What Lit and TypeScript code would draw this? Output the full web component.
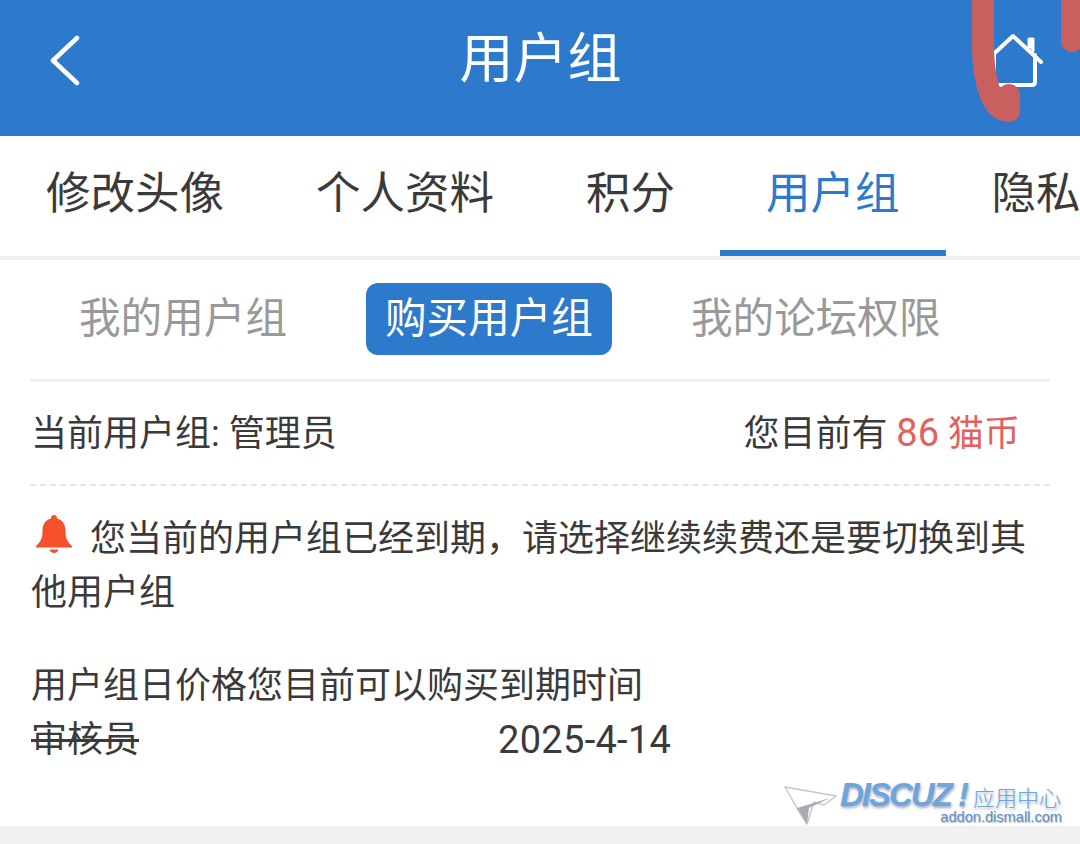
import { LitElement, html, css } from "lit";
import { customElement } from "lit/decorators.js";

@customElement("app-root")
export class AppRoot extends LitElement {
  static styles = css`
    :host {
      display: flex;
      flex-direction: column;
      position: relative;
      width: 1080px;
      height: 844px;
      overflow: hidden;
      background: #fff;
      color: #3a3a3a;
      font-family: Roboto, "Noto Sans CJK SC", sans-serif;
      font-size: 36px;
    }
    .header {
      height: 136px;
      box-sizing: border-box;
      padding: 0 37px 16px 50px;
      background: #2d79cc;
      color: #fff;
      display: grid;
      grid-template-columns: 1fr 162px 1fr;
      align-items: center;
    }
    .title {
      font-size: 54px;
      line-height: 64px;
      white-space: nowrap;
      margin-left: -6px;
    }
    .home {
      justify-self: end;
    }
    .tabs {
      display: flex;
      height: 124px;
      box-sizing: border-box;
      border-bottom: 4px solid #eee;
      overflow: hidden;
    }
    .tab {
      flex: none;
      padding: 0 46px;
      font-size: 44.5px;
      line-height: 116px;
      height: 120px;
      box-sizing: border-box;
      border-bottom: 6px solid transparent;
    }
    .tab.active {
      margin-left: -1px;
      color: #2d79cc;
      border-bottom-color: #2d79cc;
    }
    .main {
      flex: 1;
      margin: 0 30px;
    }
    .subtabs {
      display: flex;
      gap: 60px;
      align-items: center;
      height: 122px;
      box-sizing: border-box;
      padding: 23px 0 25px 30px;
      border-bottom: 3px solid #eee;
      font-size: 41.6px;
      color: #999;
    }
    .subtab {
      height: 72px;
      line-height: 72px;
      padding: 0 19px;
      border-radius: 12px;
    }
    .subtab.active {
      background: #2d79cc;
      color: #fff;
    }
    .info {
      display: flex;
      justify-content: space-between;
      align-items: center;
      height: 104px;
      box-sizing: border-box;
      padding: 0 30px 6px 1px;
      border-bottom: 2px dashed #e4e4e4;
    }
    .red {
      color: #e5605c;
    }
    .num {
      font-size: 38px;
    }
    .notice {
      margin: 26px 0 0;
      padding-left: 1px;
      line-height: 54px;
    }
    .bell {
      vertical-align: -2px;
      margin: 0 18px 0 5px;
    }
    .list {
      margin-top: 39px;
      padding-left: 1px;
      line-height: 54px;
    }
    .row {
      display: grid;
      grid-template-columns: 467px auto;
    }
    .gone {
      text-decoration: line-through;
    }
    .date {
      font-size: 38px;
      letter-spacing: 0.3px;
    }
    .footer {
      height: 18px;
      background: #f0f0f0;
    }
    .scribble {
      position: absolute;
      left: 960px;
      top: 0;
    }
    .mark {
      position: absolute;
      left: 784px;
      top: 780px;
      width: 284px;
      height: 48px;
    }
    .mark svg {
      position: absolute;
      left: 0;
      top: 4px;
    }
    .brand {
      position: absolute;
      left: 56px;
      top: 1px;
      display: flex;
      align-items: baseline;
      gap: 6px;
      white-space: nowrap;
      color: #6ea5dc;
      text-shadow: 1px 2px 3px rgba(70, 90, 120, 0.5);
    }
    .brand b {
      font: italic bold 33px/28px "Liberation Sans", sans-serif;
      letter-spacing: -2px;
    }
    .brand span {
      font-size: 22px;
      line-height: 28px;
      font-weight: 300;
    }
    .site {
      position: absolute;
      right: 6px;
      top: 29px;
      font: 14.6px/17px "Liberation Sans", sans-serif;
      color: #5b8fc8;
      text-shadow: 1px 1px 1px rgba(70, 90, 120, 0.4);
    }
  `;

  render() {
    return html`
      <div class="header">
        <svg width="30" height="51" viewBox="0 0 30 51" fill="none" stroke="#fff" stroke-width="4.5" stroke-linecap="round" stroke-linejoin="round">
          <path d="M27 3 3 25.500 27 48" />
        </svg>
        <div class="title">用户组</div>
        <svg class="home" width="60" height="55" viewBox="0 0 60 55" fill="none" stroke="#fff" stroke-width="4" stroke-linecap="round" stroke-linejoin="round">
          <path d="M2 29 30 3l28 26" />
          <path d="M11 22v27q0 3 3 3h35q3 0 3-3V22" />
          <path d="M46 14V6h4v12" fill="#fff" stroke-width="3" />
        </svg>
      </div>

      <div class="tabs">
        <div class="tab">修改头像</div>
        <div class="tab">个人资料</div>
        <div class="tab">积分</div>
        <div class="tab active">用户组</div>
        <div class="tab">隐私</div>
      </div>

      <div class="main">
        <div class="subtabs">
          <div class="subtab">我的用户组</div>
          <div class="subtab active">购买用户组</div>
          <div class="subtab">我的论坛权限</div>
        </div>

        <div class="info">
          <div>当前用户组: 管理员</div>
          <div>您目前有 <span class="red"><span class="num">86</span> 猫币</span></div>
        </div>

        <div class="notice">
          <svg class="bell" width="36" height="38" viewBox="0 0 36 38" fill="#f4502a">
            <path d="M18 0c2 0 3 1.500 3 3.500C27 5 29.500 10 29.500 16c0 6 1 10 6.500 15v1.500H0V31c5.500-5 6.500-9 6.500-15C6.500 10 9 5 15 3.500 15 1.500 16 0 18 0z" />
            <path d="M13.500 34.500h9c-.5 2-2.300 3.500-4.500 3.500s-4-1.500-4.500-3.500z" />
          </svg>您当前的用户组已经到期，请选择继续续费还是要切换到其他用户组
        </div>

        <div class="list">
          <div>用户组日价格您目前可以购买到期时间</div>
          <div class="row">
            <div class="gone">审核员</div>
            <div class="date">2025-4-14</div>
          </div>
        </div>
      </div>

      <div class="footer"></div>

      <svg class="scribble" width="120" height="130" viewBox="0 0 120 130" fill="none" stroke="#c9605f" stroke-width="22" stroke-linecap="round" stroke-linejoin="round">
        <path d="M23-10V50c1 30 8 61 26 61V95" />
        <path d="M112-10V41" />
      </svg>

      <div class="mark">
        <svg width="54" height="44" viewBox="0 0 54 44">
          <path d="M1 3 52 12 40 21 30 18 23 40 13 24z" fill="#fff" stroke="#c4c8cc" stroke-width="1.500" stroke-linejoin="round" />
          <path d="M13 24 46 14 25 24 23 40z" fill="#a9adb2" />
        </svg>
        <div class="brand"><b>DISCUZ !</b><span>应用中心</span></div>
        <div class="site">addon.dismall.com</div>
      </div>
    `;
  }
}
